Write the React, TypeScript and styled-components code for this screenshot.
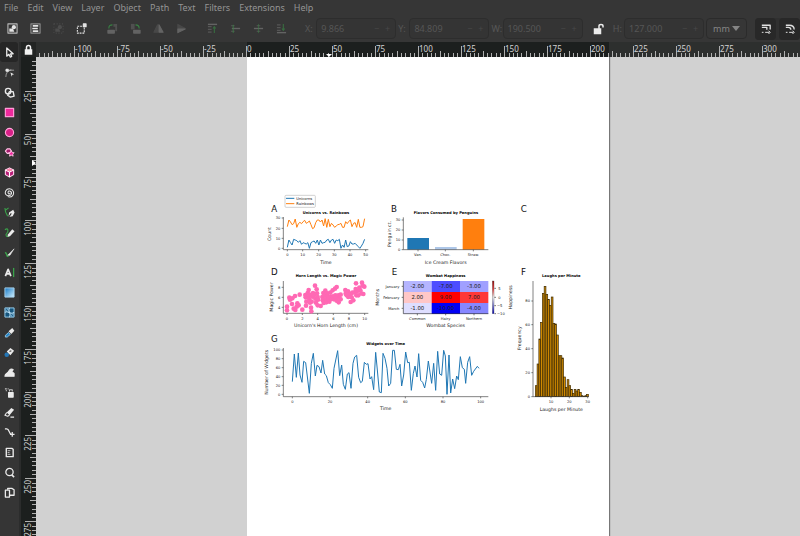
import React, { useLayoutEffect, useRef, useState } from 'react';
import styled, { createGlobalStyle, css } from 'styled-components';

const Global = createGlobalStyle`
  *, *::before, *::after { box-sizing: border-box; }
  html, body, #root { height: 100%; margin: 0; }
  body { background: #363636; font-family: "Noto Sans", "Open Sans", sans-serif; overflow: hidden; }
  button, input, select { font: inherit; color: inherit; margin: 0; padding: 0; border: 0; background: none; }
`;

const App = styled.div`
  height: 100vh;
  display: flex;
  flex-direction: column;
  background: #363636;
  overflow: hidden;
`;

const MenuBar = styled.nav`
  display: flex;
  gap: 9px;
  height: 15px;
  padding: 0 4px;
  flex: none;
  font-size: 9px;
  line-height: 14px;
  color: #949494;
`;

const MenuItem = styled.button`
  white-space: nowrap;
`;

const Toolbar = styled.div`
  display: flex;
  align-items: center;
  height: 27px;
  padding-left: 3px;
  flex: none;
  color: #565656;
  font-size: 9px;
`;

const IconGroup = styled.div`
  display: flex;
  gap: 5px;
  margin-right: 13px;
`;

const IconButton = styled.button<{ $dim?: boolean }>`
  width: 18px;
  height: 20px;
  display: flex;
  align-items: center;
  justify-content: center;
  color: ${p => (p.$dim ? '#777' : '#e4e4e4')};
  opacity: ${p => (p.$dim ? 0.7 : 1)};
`;

const FieldLabel = styled.label`
  width: 14px;
  padding-left: 2px;
`;

const Field = styled.div`
  display: flex;
  align-items: center;
  flex: none;
  width: 80px;
  height: 21px;
  padding: 0 2px 0 4px;
  border: 1px solid #2d2d2d;
  border-radius: 4px;
  background: #343434;
`;

const FieldInput = styled.input`
  flex: 1;
  min-width: 0;
  outline: none;
`;

const Step = styled.button`
  width: 11px;
  color: #484848;
`;

const LockButton = styled.button`
  width: 30px;
  height: 20px;
  padding-left: 4px;
  display: flex;
  align-items: center;
  justify-content: center;
  color: #ececec;
`;

const UnitBox = styled.div`
  position: relative;
  width: 41px;
  height: 21px;
  margin: 0 8px 0 2px;
  border: 1px solid #2b2b2b;
  border-radius: 4px;
  color: #858585;
  flex: none;
  svg { position: absolute; right: 6px; top: 7px; pointer-events: none; }
`;

const UnitSelect = styled.select`
  appearance: none;
  width: 100%;
  height: 100%;
  padding-left: 6px;
`;

const TogglePair = styled.div`
  display: flex;
  gap: 3px;
  border-radius: 4px;
  background: #303030;
`;

const Toggle = styled.button`
  width: 21px;
  height: 22px;
  display: flex;
  align-items: center;
  justify-content: center;
  border-radius: 4px;
  background: #282828;
  color: #e0e0e0;
`;

const Workspace = styled.main`
  flex: 1;
  min-height: 0;
  display: grid;
  grid-template-columns: 21px 15px 1fr;
  grid-template-rows: 15px 1fr;
`;

const Toolbox = styled.aside`
  grid-row: 1 / 3;
  display: flex;
  flex-direction: column;
  background: #353535;
  border-right: 2px solid #2b2c2c;
  overflow: hidden;
`;

const Tool = styled.button<{ $active?: boolean }>`
  width: 18px;
  height: 20px;
  flex: none;
  display: flex;
  align-items: center;
  justify-content: center;
  color: #ebebeb;
  ${p => p.$active && css`background: #262626; border-radius: 3px;`}
`;

const Corner = styled.button`
  display: flex;
  align-items: center;
  justify-content: center;
  color: #f2f2f2;
  background: #222423;
`;

const Ruler = styled.div`
  min-width: 0;
  min-height: 0;
  overflow: hidden;
  background: #1c1f1e;
`;

const RulerSvg = styled.svg`
  display: block;
  width: 100%;
  height: 100%;
  font-size: 8px;
  fill: #d2d2d2;
`;

const Canvas = styled.section`
  min-width: 0;
  min-height: 0;
  padding-left: 211px;
  background: #d1d1d1;
  overflow: hidden;
`;

const Page = styled.article`
  width: 362px;
  height: 100%;
  padding-top: 133px;
  background: #fff;
  box-shadow: 1px 0 1px #777;
`;

const Figure = styled.svg`
  display: block;
  width: 100%;
  font-family: "DejaVu Sans", sans-serif;
  font-size: 11px;
  fill: #222;
`;

const Panel = styled.text`
  font-size: 26px;
  fill: #111;
`;

const Title = styled.text`
  font-size: 11px;
  font-weight: 700;
  text-anchor: middle;
  fill: #000;
`;

const AxisLabel = styled.text`
  font-size: 14px;
  text-anchor: middle;
`;

const Value = styled.text`
  font-size: 16px;
  text-anchor: middle;
`;

const PINK = '#f02a9d';
const GREEN = '#3aa34a';

const Glyph = ({ children, size = 12 }: { children: React.ReactNode; size?: number }) => (
  <svg width={size} height={size} viewBox="0 0 12 12" fill="none" stroke="currentColor" strokeWidth="1.2" strokeLinejoin="round" aria-hidden="true">
    {children}
  </svg>
);

const Blob = () => (
  <g fill="currentColor" stroke="none">
    <circle cx="7.500" cy="4.500" r="2.300" />
    <path d="M2.500 6h4l1.500 3.500H2.500z" />
  </g>
);

const selectIcons = [
  { label: 'Select all', art: <><path d="M1 1h10v10H1z" opacity=".75" /><Blob /></> },
  { label: 'Select all in all layers', art: <><path d="M1 1h10v10H1z" opacity=".5" /><path d="M3 3.200h6M2.500 6h6M3 8.800h6" strokeWidth="1.800" /></> },
  { label: 'Deselect', dim: true, art: <g opacity=".5"><Blob /><path d="M1 1h10v10H1z" strokeDasharray="1 2" /></g> },
  { label: 'Touch selection', art: <><path d="M1.500 3.500h7.500v7.500H1.500z" strokeDasharray="2 1" /><path d="M8 1h3v3H8z" fill="currentColor" /></> },
];
const transformIcons = [
  { label: 'Rotate left', art: <><path d="M1 8h7v3H1z" fill="currentColor" /><path d="M7 1h4v8H9V4H7z" fill="#777" stroke="none" opacity=".6" /><path d="M2 6c0-3 1-4 4-4" stroke={GREEN} /></> },
  { label: 'Rotate right', art: <><path d="M4 8h7v3H4z" fill="currentColor" /><path d="M1 1h4v6H1z" fill="#777" stroke="none" opacity=".6" /><path d="M6 2c3 0 4 1 4 4" stroke={GREEN} /></> },
  { label: 'Flip horizontally', art: <><path d="M5 2v8H1z" fill="currentColor" opacity=".4" /><path d="M6.500 2v8H11z" fill="currentColor" /></> },
  { label: 'Flip vertically', art: <><path d="M2 1.500L10 6H2z" fill="currentColor" opacity=".4" /><path d="M2 10.500L10 6.500H2z" fill="currentColor" /></> },
];
const orderIcons = [
  { label: 'Raise to top', art: <><path d="M1 1.500h10" strokeWidth="1.500" /><path d="M1 4h4M1 7h4M1 10h4" opacity=".7" /><path d="M8 11V4M6.500 6L8 4l1.500 2" stroke={GREEN} opacity=".7" /></> },
  { label: 'Raise', art: <><path d="M2 6h9" strokeWidth="1.500" /><path d="M1 3h4M1 9h4" opacity=".7" /><path d="M3.500 11V2" stroke={GREEN} opacity=".7" /></> },
  { label: 'Lower', art: <><path d="M1 6h10" strokeWidth="1.500" /><path d="M4 3h4M4 9h4" opacity=".7" /><path d="M6 1v10" stroke={GREEN} opacity=".5" /></> },
  { label: 'Lower to bottom', art: <><path d="M1 10.500h10" strokeWidth="1.500" /><path d="M1 2h4M1 5h4M1 8h4" opacity=".7" /><path d="M8 1v7M6.500 6L8 8l1.500-2" stroke={GREEN} opacity=".7" /></> },
];

const tools = [
  { label: 'Selector', art: <path d="M3 1v9l2.300-2 1.500 3 1.600-.8L7 7.400h3z" fill="#222" strokeWidth="1.400" /> },
  { label: 'Node', art: <><path d="M2 11c0-5 2-7 6-8" opacity=".5" /><path d="M2.500 2.500h2v2h-2z" fill="currentColor" /><path d="M1 3.500h10" opacity=".5" /><path d="M7 6l4 2-2 .5-.5 2z" fill="currentColor" stroke="none" /></> },
  { label: 'Shape builder', art: <><circle cx="4.500" cy="4.500" r="3" strokeWidth="1.500" /><path d="M6 5h4l1 5-4 1-3-2z" strokeWidth="1.500" /></> },
  { label: 'Rectangle', art: <path d="M1.500 1.500h9v9h-9z" fill={PINK} stroke="#ff9bd6" strokeWidth="1.300" /> },
  { label: 'Ellipse', art: <circle cx="6" cy="6" r="4.500" fill="#d92088" stroke="#ffa6d8" strokeWidth="1.200" /> },
  { label: 'Star', art: <><path d="M3.500 2h3L8 4.500 6.500 7h-3L1.500 4.500z" fill="#a31c6c" stroke="#ffc4e5" /><path d="M8 4l1 2 2 .2-1.500 1.600.5 2.200-2-1-2 1 .4-2.200L5 6.200 7 6z" fill={PINK} stroke="#ffd1eb" strokeWidth=".9" /></> },
  { label: '3D box', art: <><path d="M6 1l4.500 2.300v5L6 11 1.500 8.300v-5z" fill="#b91e78" stroke="#ffd1eb" /><path d="M1.500 3.300L6 5.500l4.500-2.200M6 5.500V11" stroke="#fff" /><path d="M6 1.500l3.500 1.800L6 5 2.500 3.300z" fill="#f8a" stroke="none" /></> },
  { label: 'Spiral', art: <path d="M4 10.500c5 1.500 7.500-2.500 6-6S3.500 1 2 4s0 5.500 3 5.500S9 6.500 7.500 5 4 4.500 4.500 6.500 7 7.500 6.500 6.300" strokeWidth="1.100" /> },
  { label: 'Pen', art: <><path d="M1 1c0 4 1 6 3 9M1 4l4-3" stroke={GREEN} /><path d="M5 11l.5-5L10 3l1.500 3-2 4z" fill="currentColor" stroke="none" /><path d="M5 11l3-4" stroke="#333" /></> },
  { label: 'Pencil', art: <><path d="M1 3c4-3 4 2 2 4s0 4 2 3" stroke={GREEN} /><path d="M4 8.500L9 2.500l2.500 2L6.500 10l-2.500.5z" fill="currentColor" stroke="none" /></> },
  { label: 'Calligraphy', art: <><path d="M1 6c3 0 1 5 4 4" stroke={GREEN} strokeWidth="1.600" /><path d="M4 9l7-7-4.500 7z" fill="currentColor" stroke="currentColor" strokeWidth=".6" /></> },
  { label: 'Text', art: <><path d="M1.500 10L4.500 2.500 7.500 10M2.500 7.500h4" strokeWidth="1.900" /><path d="M10.500 1v10" stroke={GREEN} strokeWidth="1.400" /></> },
  { label: 'Gradient', art: <><defs><linearGradient id="tool-gradient" x2="1" y2="1"><stop stopColor="#1678c4" /><stop offset="1" stopColor="#d0f0ff" /></linearGradient></defs><path d="M1 1h10v10H1z" fill="url(#tool-gradient)" stroke="#a8d2ed" strokeWidth="1" /></> },
  { label: 'Mesh', art: <><path d="M1 1h10v10H1z" fill="#16557d" stroke="#9ed5f5" strokeWidth="1" /><path d="M1 6c3-3 6 3 10 0M6 1c-3 4 3 6 0 10" stroke="#c5e8fb" strokeWidth="1.100" /><path d="M3 1c2 3 0 3-2 2M9 11c-2-3 0-3 2-2" stroke="#9ed5f5" strokeWidth=".8" /></> },
  { label: 'Dropper', art: <><path d="M5 6l2 2-3.500 3H1.500V9z" fill="#2786c8" stroke="#b0ddf7" strokeWidth=".8" /><path d="M5 4.500l3 3L11.300 4 9 1z" fill="currentColor" stroke="none" /></> },
  { label: 'Paint bucket', art: <><circle cx="3" cy="8.500" r="2.500" fill="#2476b5" stroke="none" /><path d="M3 5l4-4 4 3-4 5z" fill="currentColor" stroke="none" /><path d="M6 5l2-1" stroke="#444" /></> },
  { label: 'Tweak', art: <path d="M1 10c0-3 3-3 4-5s3-4 5-2L8.500 5l2.500 2v3z" fill="currentColor" /> },
  { label: 'Spray', art: <><path d="M5 6h5v5H5z" fill="currentColor" /><path d="M6 5V3h3v2M1 2h2M2 4h1M4 2h1" opacity=".8" /></> },
  { label: 'Eraser', art: <><path d="M3 6l5-5 3 2-5 6z" fill="currentColor" stroke="none" /><path d="M3 6l-2 3 3 1 2-1M7 11h4" /></> },
  { label: 'Connector', art: <><path d="M1 2h2c3 0 2 5 5 6" strokeWidth="1.500" /><path d="M9 5.500v5M6.500 8h5" strokeWidth="1.400" /></> },
  { label: 'Measure', art: <><path d="M2.500 1.500h6l1.500 1V10.500H2.500z" strokeWidth="1.500" /><path d="M4 4h3M4 6h2M4 8h3" strokeWidth=".8" /></> },
  { label: 'Zoom', art: <><circle cx="6" cy="5.500" r="4" strokeWidth="1.400" /><path d="M8.500 8.500L11 11" strokeWidth="1.800" /></> },
  { label: 'Pages', art: <><path d="M1.500 3.500H6v7.500H1.500z" strokeWidth="1.400" /><path d="M4 3V1.500h4.500L11 3v6H6.500" strokeWidth="1.400" /></> },
];

const Lock = ({ open = false }: { open?: boolean }) => (
  <svg width="11" height="12" viewBox="0 0 11 12" fill="none" stroke="currentColor" strokeWidth="1.500" aria-hidden="true">
    <path d={open ? 'M6 6V3c0-2 4-2 4 0v1.500' : 'M3.500 6V3.500c0-2.600 4-2.600 4 0V6'} />
    <path d={open ? 'M1.500 6h6v4.500h-6z' : 'M2.500 6h6v4h-6z'} fill="currentColor" />
  </svg>
);

// Ruler scale: one labelled interval is 25 mm and 43 px long at this zoom.
const STEP = 43.04;

const tickPath = (origin: number, length: number, vertical: boolean) => {
  let d = '';
  const first = Math.ceil((-origin * 10) / STEP);
  const last = Math.floor(((length - origin) * 10) / STEP);
  for (let i = first; i <= last; i++) {
    const at = Math.round(origin + (i * STEP) / 10) + 0.5;
    const len = i % 10 === 0 ? 11 : i % 5 === 0 ? 6 : 4;
    d += vertical ? `M15 ${at}h-${len}` : `M${at} 15v-${len}`;
  }
  return d;
};

const range = (from: number, to: number) => Array.from({ length: Math.max(0, to - from + 1) }, (_, i) => from + i);

const useBox = () => {
  const ref = useRef<HTMLDivElement>(null);
  const [box, setBox] = useState({ width: 0, height: 0 });
  useLayoutEffect(() => {
    const el = ref.current;
    if (!el) return;
    const read = () => setBox({ width: el.clientWidth, height: el.clientHeight });
    read();
    const observer = new ResizeObserver(read);
    observer.observe(el);
    return () => observer.disconnect();
  }, []);
  return [ref, box] as const;
};

const TopRuler = () => {
  const [ref, { width }] = useBox();
  return (
    <Ruler ref={ref}>
      <RulerSvg aria-label="Horizontal ruler">
        <rect width="211" height="15" fill="#2d2f2e" />
        <rect x="573" width="100%" height="15" fill="#2d2f2e" />
        <path d={tickPath(210, width, false)} stroke="#b0b0b0" />
        {range(-4, Math.floor((width - 232) / STEP)).map(n => (
          <text key={n} x={Math.round(211 + n * STEP)} y="10">{n * 25}</text>
        ))}
        <path d="M290 12h6l-3 3z" fill="#fff" />
      </RulerSvg>
    </Ruler>
  );
};

const LeftRuler = () => {
  const [ref, { height }] = useBox();
  return (
    <Ruler ref={ref}>
      <RulerSvg aria-label="Vertical ruler">
        <path d={tickPath(-9, height, true)} stroke="#b0b0b0" />
        {range(1, Math.floor((height + 2) / STEP)).map(n => (
          <text key={n} transform={`translate(10 ${Math.round(-7 + n * STEP)}) rotate(-90)`} textAnchor="end">{n * 25}</text>
        ))}
        <path d="M11 103v6l4-3z" fill="#fff" />
      </RulerSvg>
    </Ruler>
  );
};

const rainbows = [110, 90, 96, 104, 101, 87, 112, 101, 97, 101, 95, 91, 100, 97, 93, 104, 116, 113, 98, 90, 90, 96, 90, 108, 86, 112, 88, 110, 100, 105, 112, 108, 104, 103, 100, 112, 112, 95, 101, 94, 90, 110, 100, 98, 112, 88, 112, 112, 110, 86];
const unicorns = [172, 150, 158, 165, 148, 150, 152, 157, 152, 163, 158, 160, 162, 158, 175, 158, 155, 153, 160, 150, 165, 150, 160, 158, 157, 150, 148, 158, 150, 148, 160, 150, 152, 148, 175, 165, 172, 150, 170, 168, 155, 162, 162, 160, 165, 170, 175, 168, 160, 148];
const series = (values: number[]) => values.map((y, i) => `${(82 + i * 4.73).toFixed(1)},${y}`).join(' ');

const widgets = '97,155 103,72 109,142 115,69 120,135 126,157 131,94 137,98 148,190 154,100 160,70 166,138 171,106 177,110 183,129 188,91 194,132 199,137 205,158 211,164 217,175 222,115 233,62 239,137 245,105 250,163 256,178 262,132 267,128 273,175 279,100 284,81 290,76 296,142 302,158 307,154 313,97 319,103 324,101 330,147 335,140 341,179 347,67 352,120 358,186 364,188 369,70 375,85 381,115 386,168 392,160 398,61 403,61 409,118 415,119 420,103 425,168 431,135 437,66 443,98 448,97 454,181 460,130 465,108 471,141 476,71 482,151 488,157 494,174 499,148 505,93 515,160 521,100 527,181 533,64 539,132 545,136 551,61 556,78 561,193 567,75 572,189 578,147 584,176 590,138 595,149 601,80 607,113 613,118 617,160 623,97 629,80 635,136 641,124 652,109 657,115';

const horns = [[81, 125], [81, 136], [88, 98], [90, 104], [96, 117], [97, 100], [101, 131], [105, 93], [106, 135], [110, 125], [112, 115], [116, 121], [119, 89], [127, 134], [136, 90], [137, 97], [139, 110], [138, 122], [143, 84], [146, 75], [146, 96], [148, 104], [150, 113], [149, 89], [153, 128], [154, 139], [155, 110], [157, 95], [159, 84], [162, 90], [165, 62], [166, 101], [168, 113], [170, 73], [171, 85], [173, 121], [173, 96], [174, 104], [182, 123], [187, 96], [188, 106], [190, 84], [191, 114], [194, 92], [196, 77], [197, 103], [199, 112], [202, 85], [203, 94], [206, 103], [208, 110], [211, 83], [211, 96], [215, 102], [218, 76], [219, 94], [222, 103], [225, 71], [226, 91], [228, 99], [230, 66], [230, 107], [235, 91], [236, 112], [238, 98], [242, 89], [242, 103], [256, 75], [257, 86], [260, 91], [264, 79], [265, 96], [268, 90], [272, 87], [272, 111], [275, 97], [277, 83], [280, 106], [284, 82], [287, 72], [288, 55], [289, 91], [292, 78], [295, 91], [298, 68], [301, 76], [304, 85], [306, 53], [308, 62], [310, 87], [313, 65]];

const laughs = [572, 507, 432, 382, 295, 274, 298, 313, 331, 306, 385, 387, 420, 482, 482, 489, 546, 577, 554, 572, 583, 595, 583, 588, 583, 592, 602, 604, 602, 598];

const heat = [
  ['January', [['-2.00', '#b5b5ff'], ['-7.00', '#4d4dff'], ['-3.00', '#a0a0ff']]],
  ['February', [['2.00', '#ffc7c7'], ['9.00', '#ff0000'], ['7.00', '#ff3838']]],
  ['March', [['-1.00', '#dedeff'], ['-10.00', '#0000f5'], ['-4.00', '#8787ff']]],
] as [string, [string, string][]][];

type AxisProps = {
  left: number;
  top: number;
  right: number;
  bottom: number;
  xs: [string, number][];
  ys: [string, number][];
};

const Axes = ({ left, top, right, bottom, xs, ys }: AxisProps) => (
  <g>
    <path
      d={`M${left} ${top}V${bottom}H${right}` + xs.map(([, x]) => `M${x} ${bottom}v5`).join('') + ys.map(([, y]) => `M${left} ${y}h-5`).join('')}
      fill="none" stroke="#444" strokeWidth="2"
    />
    {xs.map(([t, x]) => <text key={t} x={x} y={bottom + 20} textAnchor="middle">{t}</text>)}
    {ys.map(([t, y]) => <text key={t} x={left - 9} y={y + 4} textAnchor="end">{t}</text>)}
  </g>
);

const SideLabel = ({ x, y, children }: { x: number; y: number; children: string }) => (
  <AxisLabel transform={`translate(${x} ${y}) rotate(-90)`}>{children}</AxisLabel>
);

const Charts = () => (
  <Figure viewBox="0 0 1086 690" role="img" aria-label="Seven-panel figure">
    <defs>
      <linearGradient id="bar" x2="0" y2="1">
        <stop stopColor="#9c0808" /><stop offset=".25" stopColor="#ef4040" />
        <stop offset=".5" stopColor="#fff" /><stop offset="1" stopColor="#0000b8" />
      </linearGradient>
    </defs>
    <g transform="translate(39 0)">
      <Panel x="34" y="65">A</Panel>
      <rect x="75" y="16" width="91" height="36" rx="3" fill="#fff" stroke="#bbb" strokeWidth="2" />
      <path d="M78 25h25" stroke="#1f77b4" strokeWidth="3" />
      <path d="M78 41h25" stroke="#ff7f0e" strokeWidth="3" />
      <text x="109" y="29">Unicorns</text>
      <text x="109" y="45">Rainbows</text>
      <Title x="198" y="72">Unicorns vs. Rainbows</Title>
      <Axes left={70} top={81} right={325} bottom={179}
        xs={[['0', 82], ['10', 128], ['20', 176], ['30', 223], ['40', 270], ['50', 317]]}
        ys={[['30', 84], ['20', 115], ['10', 145], ['0', 175]]} />
      <polyline points={series(rainbows)} fill="none" stroke="#ff7f0e" strokeWidth="3" />
      <polyline points={series(unicorns)} fill="none" stroke="#1f77b4" strokeWidth="3" />
      <AxisLabel x="198" y="221">Time</AxisLabel>
      <SideLabel x={32} y={132}>Count</SideLabel>
    </g>
    <g transform="translate(384 0)">
      <Panel x="48" y="65">B</Panel>
      <Title x="213" y="72">Flavors Consumed by Penguins</Title>
      <path d="M97 144h65v35H97z" fill="#1f77b4" />
      <path d="M180 171h65v8h-65z" fill="#aec7e8" />
      <path d="M263 87h65v92h-65z" fill="#ff7f0e" />
      <Axes left={85} top={82} right={340} bottom={179}
        xs={[['Van.', 129], ['Choc.', 211], ['Straw.', 295]]}
        ys={[['30', 90], ['20', 120], ['10', 150], ['0', 179]]} />
      <AxisLabel x="212" y="221">Ice Cream Flavors</AxisLabel>
      <SideLabel x={47} y={132}>Penguin ct.</SideLabel>
    </g>
    <g transform="translate(39 225)">
      <Panel x="33" y="30">D</Panel>
      <Title x="198" y="37">Horn Length vs. Magic Power</Title>
      <Axes left={70} top={48} right={325} bottom={145}
        xs={[['0', 81], ['2', 127], ['4', 173], ['6', 220], ['8', 267], ['10', 314]]}
        ys={[['8', 67], ['6', 97], ['4', 127]]} />
      {horns.map(([x, y]) => <circle key={`${x}-${y}`} cx={x} cy={y} r="7" fill="#ff69b4" />)}
      <AxisLabel x="198" y="187">Unicorn's Horn Length (cm)</AxisLabel>
      <SideLabel x={39} y={96}>Magic Power</SideLabel>
    </g>
    <g transform="translate(369 225)">
      <Panel x="65" y="30">E</Panel>
      <Title x="227" y="37">Wombat Happiness</Title>
      {heat.map(([month, cells], row) => (
        <g key={month}>
          <path d={`M95 ${64 + row * 33}h5`} stroke="#333" strokeWidth="2" />
          <text x="88" y={68 + row * 33} textAnchor="end">{month}</text>
          {cells.map(([value, color], col) => (
            <g key={value}>
              <rect x={100 + col * 85} y={48 + row * 33} width="85" height="33" fill={color} />
              <Value x={142 + col * 85} y={70 + row * 33}>{value}</Value>
            </g>
          ))}
        </g>
      ))}
      <path d="M100 48v98h255M142 146v5M227 146v5M312 146v5" fill="none" stroke="#333" strokeWidth="2" />
      <text x="142" y="166" textAnchor="middle">Common</text>
      <text x="227" y="166" textAnchor="middle">Hairy</text>
      <text x="312" y="166" textAnchor="middle">Northern</text>
      <rect x="367" y="48" width="5" height="98" fill="url(#bar)" stroke="#444" />
      <path d="M373 70h5M373 97h5M373 122h5M373 146h5" stroke="#333" strokeWidth="2" />
      <text x="385" y="74">5</text>
      <text x="385" y="101">0</text>
      <text x="381" y="126">−5</text>
      <text x="381" y="149">−10</text>
      <AxisLabel x="227" y="187">Wombat Species</AxisLabel>
      <SideLabel x={28} y={97}>Months</SideLabel>
      <SideLabel x={427} y={97}>Happiness</SideLabel>
    </g>
    <g transform="translate(39 420)">
      <Panel x="33" y="36">G</Panel>
      <Title x="377" y="44">Widgets over Time</Title>
      <Axes left={70} top={54} right={685} bottom={200}
        xs={[['0', 97], ['20', 210], ['40', 323], ['60', 436], ['80', 549], ['100', 662]]}
        ys={[['100', 60], ['80', 86], ['60', 113], ['40', 140], ['20', 166], ['0', 193]]} />
      <polyline points={widgets} fill="none" stroke="#1f77b4" strokeWidth="3" />
      <AxisLabel x="377" y="241">Time</AxisLabel>
      <SideLabel x={25} y={127}>Number of Widgets</SideLabel>
    </g>
    <g transform="translate(789 15)">
      <Panel x="32" y="50">C</Panel>
      <Panel x="33" y="240">F</Panel>
      <Title x="154" y="247">Laughs per Minute</Title>
      {laughs.map((y, i) => (
        <rect key={i} x={76 + i * 5.3} y={y} width="5.3" height={605 - y} fill="#d18a00" stroke="#3a2800" strokeWidth="2" />
      ))}
      <Axes left={69} top={258} right={236} bottom={605}
        xs={[['10', 123], ['20', 178], ['30', 233]]}
        ys={[['80', 318], ['60', 389], ['40', 461], ['20', 533], ['0', 605]]} />
      <AxisLabel x="154" y="647">Laughs per Minute</AxisLabel>
      <SideLabel x={32} y={430}>Frequency</SideLabel>
    </g>
  </Figure>
);

const NumberField = ({ name, value }: { name: string; value: string }) => (
  <>
    <FieldLabel htmlFor={`field-${name}`}>{name}:</FieldLabel>
    <Field>
      <FieldInput id={`field-${name}`} defaultValue={value} />
      <Step aria-label={`Decrease ${name}`}>−</Step>
      <Step aria-label={`Increase ${name}`}>+</Step>
    </Field>
  </>
);

const menus = ['File', 'Edit', 'View', 'Layer', 'Object', 'Path', 'Text', 'Filters', 'Extensions', 'Help'];

export default function Editor() {
  return (
    <App>
      <Global />
      <MenuBar>{menus.map(m => <MenuItem key={m}>{m}</MenuItem>)}</MenuBar>
      <Toolbar>
        <IconGroup>
          {selectIcons.map(i => <IconButton key={i.label} aria-label={i.label} $dim={i.dim}><Glyph size={11}>{i.art}</Glyph></IconButton>)}
        </IconGroup>
        <IconGroup>
          {transformIcons.map(i => <IconButton key={i.label} aria-label={i.label} $dim><Glyph size={11}>{i.art}</Glyph></IconButton>)}
        </IconGroup>
        <IconGroup>
          {orderIcons.map(i => <IconButton key={i.label} aria-label={i.label} $dim><Glyph size={11}>{i.art}</Glyph></IconButton>)}
        </IconGroup>
        <NumberField name="X" value="9.866" />
        <NumberField name="Y" value="84.809" />
        <NumberField name="W" value="190.500" />
        <LockButton aria-label="Lock proportions"><Lock open /></LockButton>
        <NumberField name="H" value="127.000" />
        <UnitBox>
          <UnitSelect aria-label="Unit" defaultValue="mm"><option>mm</option><option>px</option></UnitSelect>
          <svg width="8" height="5" aria-hidden="true"><path d="M0 0h8L4 5z" fill="#858585" /></svg>
        </UnitBox>
        <TogglePair>
          <Toggle aria-label="Scale stroke width"><Glyph size={10}><path d="M1 1.500h10v5M1 4h6v3" strokeWidth="1.600" /><path d="M1 10h2M5 10h5M9 8l2 2-2 2" /></Glyph></Toggle>
          <Toggle aria-label="Scale rounded corners"><Glyph size={10}><path d="M1 1.500h4c4 0 6 2 6 5M1 4h3c2 0 3 1 3 3" strokeWidth="1.600" /><path d="M1 10h2M5 10h5M9 8l2 2-2 2" /></Glyph></Toggle>
        </TogglePair>
      </Toolbar>
      <Workspace>
        <Toolbox>
          {tools.map((t, i) => <Tool key={t.label} aria-label={t.label} $active={i === 0}><Glyph size={11}>{t.art}</Glyph></Tool>)}
        </Toolbox>
        <Corner aria-label="Lock guides"><Lock /></Corner>
        <TopRuler />
        <LeftRuler />
        <Canvas>
          <Page><Charts /></Page>
        </Canvas>
      </Workspace>
    </App>
  );
}
